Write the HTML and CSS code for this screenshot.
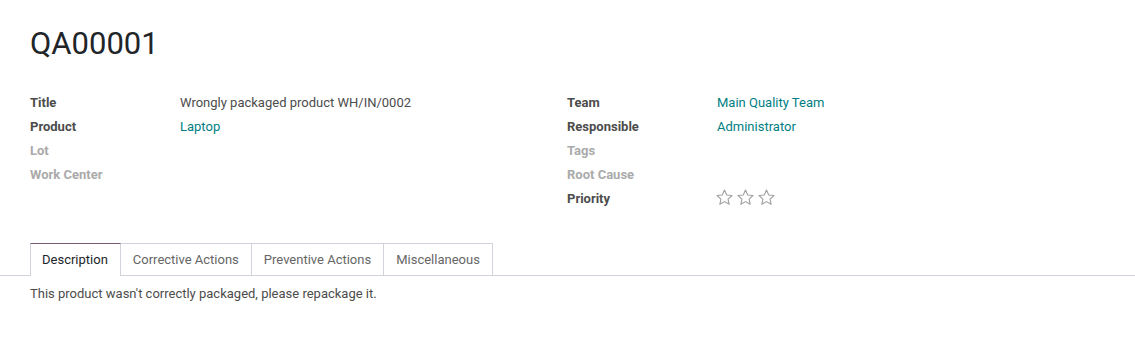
FILE: index.html
```html
<!DOCTYPE html>
<html>
<head>
<meta charset="utf-8">
<link rel="stylesheet" href="styles.css">
</head>
<body>
<div class="sheet">
  <h1 class="title">QA00001</h1>
  <div class="groups">
    <div class="group">
      <div class="row"><span class="label">Title</span><span class="value">Wrongly packaged product WH/IN/0002</span></div>
      <div class="row"><span class="label">Product</span><span class="value link">Laptop</span></div>
      <div class="row"><span class="label empty">Lot</span><span class="value"></span></div>
      <div class="row"><span class="label empty">Work Center</span><span class="value"></span></div>
    </div>
    <div class="group">
      <div class="row"><span class="label">Team</span><span class="value link">Main Quality Team</span></div>
      <div class="row"><span class="label">Responsible</span><span class="value link">Administrator</span></div>
      <div class="row"><span class="label empty">Tags</span><span class="value"></span></div>
      <div class="row"><span class="label empty">Root Cause</span><span class="value"></span></div>
      <div class="row"><span class="label">Priority</span><span class="value stars">
        <svg class="star" viewBox="0 0 24 24"><path d="M12 2.6l2.8 6.2 6.7.7-5 4.5 1.4 6.6L12 17.2l-5.9 3.4 1.4-6.6-5-4.5 6.7-.7z"/></svg>
        <svg class="star" viewBox="0 0 24 24"><path d="M12 2.6l2.8 6.2 6.7.7-5 4.5 1.4 6.6L12 17.2l-5.9 3.4 1.4-6.6-5-4.5 6.7-.7z"/></svg>
        <svg class="star" viewBox="0 0 24 24"><path d="M12 2.6l2.8 6.2 6.7.7-5 4.5 1.4 6.6L12 17.2l-5.9 3.4 1.4-6.6-5-4.5 6.7-.7z"/></svg>
      </span></div>
    </div>
  </div>
</div>
<div class="tabs">
  <div class="tab active">Description</div>
  <div class="tab">Corrective Actions</div>
  <div class="tab">Preventive Actions</div>
  <div class="tab">Miscellaneous</div>
</div>
<div class="tab-content">This product wasn't correctly packaged, please repackage it.</div>
</body>
</html>
```

FILE: styles.css
```css
html, body {
  margin: 0;
  padding: 0;
  background: #fff;
}
body {
  font-family: Roboto, "Liberation Sans", sans-serif;
  font-size: 13px;
  color: #4c4c4c;
  line-height: 1.5;
}
.sheet {
  padding: 0 30px;
}
.title {
  margin: 0;
  padding-top: 25px;
  font-size: 31px;
  font-weight: 400;
  line-height: 38px;
  color: #212529;
}
.groups {
  display: flex;
  margin-top: 28px;
}
.group {
  width: 537px;
}
.row {
  display: flex;
  height: 24px;
  align-items: center;
}
.label {
  width: 150px;
  font-weight: 700;
  color: #4c4c4c;
}
.label.empty {
  color: #aaaaaa;
}
.value {
  color: #4c4c4c;
}
.link {
  color: #017e84;
}
.stars {
  display: flex;
  gap: 2px;
  margin-top: -3px;
  margin-left: -2px;
}
.star {
  width: 19px;
  height: 19px;
  fill: none;
  stroke: #a0a0a0;
  stroke-width: 1.4;
  stroke-linejoin: round;
}
.tabs {
  display: flex;
  margin-top: 32px;
  padding-left: 30px;
  border-bottom: 1px solid #d0d4da;
}
.tab {
  height: 31px;
  line-height: 31px;
  padding: 0 12px;
  border: 1px solid #d0d4da;
  border-left-width: 0;
  border-bottom: none;
  color: #666;
  margin-bottom: -1px;
  background: #fff;
}
.tab:first-child {
  border-left-width: 1px;
  padding-left: 11px;
}
.tab.active {
  color: #212529;
  border-top-color: #7a5a76;
  height: 32px;
}
.tab-content {
  padding: 8px 30px;
  color: #4c4c4c;
}
```
